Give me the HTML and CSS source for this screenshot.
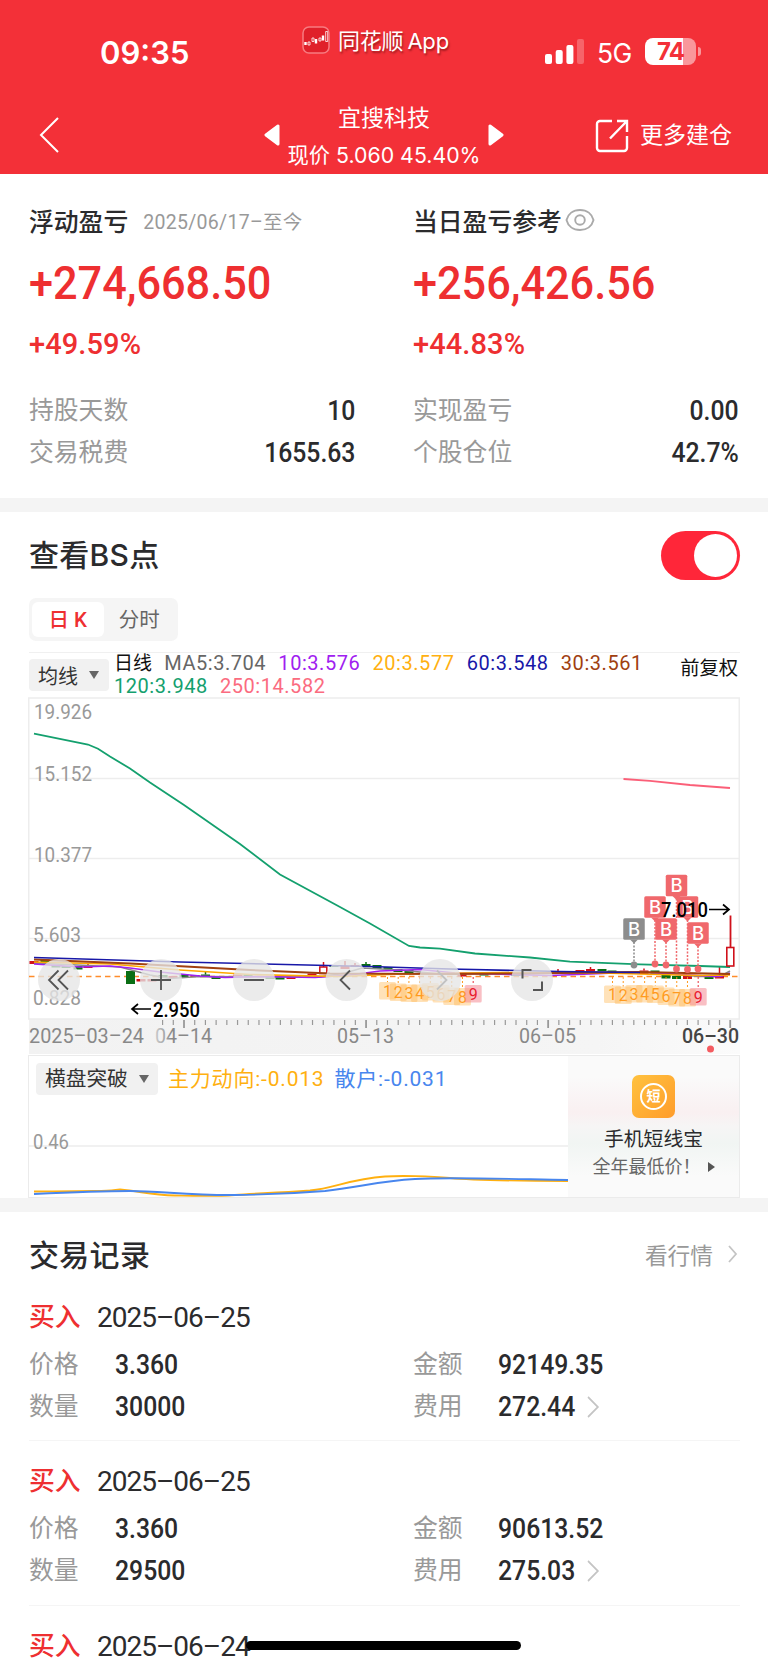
FILE: index.html
```html
<!DOCTYPE html>
<html lang="zh-CN">
<head>
    <meta charset="UTF-8">
    <meta name="viewport" content="width=device-width, initial-scale=1.0">
    <title>宜搜科技</title>
    <link rel="stylesheet" href="styles.css">
</head>
<body>

    <header class="header">
        <div class="status-bar">
            <div class="clock">09:35</div>
            <div class="app-name">
                <svg width="28" height="28" viewBox="0 0 28 28">
                    <rect x="1" y="1" width="26" height="26" rx="6" fill="#e0202a" stroke="#f77b80" stroke-width="1.5"/>
                    <path d="M3.500 16v3M14 13v4.500M21 9.500v5" stroke="#fff" stroke-width="2.400"/>
                    <path d="M6 16h2v3H6zM10 12h2v3.500h-2zM17 12h2v3h-2zM23.700 5.500h2v10h-2z" stroke="#fff" stroke-width="0.800" fill="none"/>
                </svg>
                <span>同花顺 App</span>
            </div>
            <div class="phone-state">
                <svg width="40" height="26" viewBox="0 0 40 26" fill="#fff">
                    <rect x="0" y="15" width="7" height="10" rx="2"/>
                    <rect x="10.7" y="11" width="7" height="14" rx="2"/>
                    <rect x="21.4" y="6" width="7" height="19" rx="2"/>
                    <rect x="32" y="0" width="7" height="25" rx="2" opacity="0.25"/>
                </svg>
                <span class="network">5G</span>
                <span class="battery">74</span>
                <span class="battery-tip"></span>
            </div>
        </div>
        <div class="nav">
            <svg class="back" width="22" height="38" viewBox="0 0 22 38"><path d="M20 2L3 19l17 17" fill="none" stroke="#fff" stroke-width="2"/></svg>
            <div class="stock">
                <svg width="16" height="22" viewBox="0 0 16 22"><path d="M14 2v18L2 11z" fill="#fff" stroke="#fff" stroke-width="3" stroke-linejoin="round"/></svg>
                <div class="stock-text">
                    <div class="stock-name">宜搜科技</div>
                    <div class="stock-price">现价 5.060 45.40%</div>
                </div>
                <svg width="16" height="22" viewBox="0 0 16 22"><path d="M2 2v18l12-9z" fill="#fff" stroke="#fff" stroke-width="3" stroke-linejoin="round"/></svg>
            </div>
            <div class="more">
                <svg width="34" height="34" viewBox="0 0 34 34" fill="none" stroke="#fff" stroke-width="2.4"><path d="M17 2H5a3 3 0 0 0-3 3v24a3 3 0 0 0 3 3h24a3 3 0 0 0 3-3V17M22 2h10v11M31.500 2.500L15 19.500"/></svg>
                <span>更多建仓</span>
            </div>
        </div>
    </header>

    <section class="summary">
        <div class="column">
            <div class="heading">浮动盈亏<span class="period">2025/06/17–至今</span></div>
            <div class="amount">+274,668.50</div>
            <div class="percent">+49.59%</div>
            <div class="pair"><span>持股天数</span><b>10</b></div>
            <div class="pair"><span>交易税费</span><b>1655.63</b></div>
        </div>
        <div class="column">
            <div class="heading">当日盈亏参考
                <svg width="30" height="24" viewBox="0 0 30 24" fill="none" stroke="#aaa" stroke-width="1.900"><path d="M1.500 12C3 6 8 2 15 2s12 4 13.500 10C27 18 22 22 15 22S3 18 1.500 12z"/><circle cx="15" cy="12" r="4.800"/></svg>
            </div>
            <div class="amount">+256,426.56</div>
            <div class="percent">+44.83%</div>
            <div class="pair"><span>实现盈亏</span><b>0.00</b></div>
            <div class="pair"><span>个股仓位</span><b>42.7%</b></div>
        </div>
    </section>

    <section class="bs">
        <div class="bs-head">
            <h2>查看BS点</h2>
            <div class="switch"><i></i></div>
        </div>
        <div class="tabs">
            <span class="tab active">日 K</span>
            <span class="tab">分时</span>
        </div>
        <div class="legend">
            <div class="select">均线<i></i></div>
            <div class="ma-list">
                <span class="day">日线</span>
                <span class="ma5">MA5:3.704</span>
                <span class="ma10">10:3.576</span>
                <span class="ma20">20:3.577</span>
                <span class="ma60">60:3.548</span>
                <span class="ma30">30:3.561</span>
                <span class="ma120">120:3.948</span>
                <span class="ma250">250:14.582</span>
            </div>
            <div class="adjust">前复权</div>
        </div>

        <svg class="chart" width="768" height="358" viewBox="0 697 768 358">
            <defs>
                <linearGradient id="band" x1="0" x2="1" y1="0" y2="0">
                    <stop offset="0" stop-color="#f2f2f2"/>
                    <stop offset="0.8" stop-color="#f5f5f5"/>
                    <stop offset="1" stop-color="#fbfbfb"/>
                </linearGradient>
                <linearGradient id="fade" x1="0" x2="1" y1="0" y2="0">
                    <stop offset="0" stop-color="#ccc"/>
                    <stop offset="0.3" stop-color="#888"/>
                </linearGradient>
            </defs>
            <rect x="29" y="1019" width="711" height="35" fill="url(#band)"/>
            <g fill="none" stroke="#ededed" stroke-width="1.500">
                <rect x="28.750" y="698" width="710.500" height="321"/>
                <path d="M29 778.500H739M29 858.500H739M29 938.500H739"/>
            </g>
            <g class="axis">
                <text x="34" y="718.500" textLength="58" lengthAdjust="spacingAndGlyphs">19.926</text>
                <text x="34" y="781" textLength="58" lengthAdjust="spacingAndGlyphs">15.152</text>
                <text x="34" y="861.500" textLength="58" lengthAdjust="spacingAndGlyphs">10.377</text>
                <text x="33" y="942" textLength="48" lengthAdjust="spacingAndGlyphs">5.603</text>
                <text x="33" y="1004.500" textLength="48" lengthAdjust="spacingAndGlyphs">0.828</text>
            </g>
            <path d="M29 976.500H739" stroke="#ff8c2b" stroke-width="1.400" stroke-dasharray="5.500 4"/>
            <g id="candles"></g>
            <g fill="none" stroke-width="1.600">
                <path stroke="#888" d="M34 963L120 967 150 975 170 978.500 200 976.500 320 977 345 973 362 968 400 970 440 974 560 973 640 972 680 975 700 976.500 720 976.500 730 971"/>
                <path stroke="#a020f0" d="M34 964L80 967 110 966 130 968 160 972 200 976 225 977.500 260 976.500 315 977.500 350 975 380 971 420 969.500 455 973 550 975.500 590 974 640 972 690 975 715 976.500 722 976 730 973"/>
                <path stroke="#ffa800" d="M34 962L110 964 180 970 250 974.500 340 976.500 400 974 500 972.500 600 973 700 975.500 730 975"/>
                <path stroke="#a04010" stroke-width="2" d="M34 959.500L130 963.500 250 970 330 973.500 450 974 520 973.500 640 972 730 974"/>
                <path stroke="#1818a8" d="M34 957.500L180 962 370 966.500 450 969 560 971.500 640 972.500"/>
                <path stroke="#14a06e" stroke-width="1.800" d="M34 733.700L88 744.500 98 748.700 110 756.500 130 768.500 150 782.500 184 805 240 844 280 874.500 340 907 370 923.500 409 946 420 947.500 440 948.700 475 953.500 530 957.500 570 961.700 640 964.300 700 966 730 967"/>
                <path stroke="#fb5f78" stroke-width="1.800" d="M623.500 779L650 780.800 690 785 730 788"/>
            </g>
            <g id="flags"></g>
            <g id="buys"></g>
            <g stroke="#d0111b" fill="#fff"><path d="M730.500 915.500V947" stroke-width="1.800"/><rect x="726.800" y="947.500" width="7" height="18.500" stroke-width="1.600"/></g>
            <g class="extreme">
                <text x="661" y="917" textLength="47" lengthAdjust="spacingAndGlyphs">7.010</text>
                <text x="153" y="1016.500" textLength="47" lengthAdjust="spacingAndGlyphs">2.950</text>
                <path d="M709 909.500H729M723 904.500l6 5-6 5M151 1009H132M138 1004l-6 5 6 5"/>
            </g>
            <g fill="#e6e6e6" fill-opacity="0.780">
                <circle cx="59" cy="980" r="21"/>
                <circle cx="161" cy="980" r="21"/>
                <circle cx="254" cy="980" r="21"/>
                <circle cx="346.500" cy="980" r="21"/>
                <circle cx="440" cy="980" r="21"/>
                <circle cx="532" cy="980" r="21"/>
            </g>
            <g fill="none" stroke="#555" stroke-width="1.800">
                <path d="M58.500 970.500L49 980l9.500 9.500M68 970.500L58.500 980l9.500 9.500"/>
                <path d="M151 980h20M161 970v20M244 980h20M350 970.500L340.500 980l9.500 9.500"/>
                <path d="M437 970.500l9.500 9.500-9.500 9.500" stroke="#c2c2c2"/>
                <path d="M522.500 978.500v-8.500h9M533 990h9v-8.500" stroke-width="2"/>
            </g>
            <g id="ticks" stroke="#999"></g>
            <g class="axis dates">
                <text x="29" y="1043" textLength="115" lengthAdjust="spacingAndGlyphs">2025–03–24</text>
                <text x="155" y="1043" textLength="57" lengthAdjust="spacingAndGlyphs" fill="url(#fade)">04–14</text>
                <text x="337" y="1043" textLength="57" lengthAdjust="spacingAndGlyphs">05–13</text>
                <text x="519" y="1043" textLength="57" lengthAdjust="spacingAndGlyphs">06–05</text>
                <text x="682" y="1043" textLength="57" lengthAdjust="spacingAndGlyphs" class="today">06–30</text>
            </g>
            <circle cx="710.500" cy="1049" r="3.500" fill="#f45b60"/>
        </svg>

        <div class="indicator">
            <div class="indicator-chart">
                <div class="indicator-legend">
                    <div class="select">横盘突破<i></i></div>
                    <span class="main-force">主力动向:-0.013</span>
                    <span class="retail">散户:-0.031</span>
                </div>
                <svg width="539" height="101" viewBox="29 1096 539 101">
                    <path d="M29 1146H568" stroke="#ededed" stroke-width="1.500"/>
                    <text x="33" y="1149" textLength="36" lengthAdjust="spacingAndGlyphs" class="axis">0.46</text>
                    <path fill="none" stroke="#ffb010" stroke-width="1.900" d="M34 1191.500C60 1191 75 1191.200 95 1191S115 1189.500 120 1189.500C140 1191 150 1195 175 1195.500S215 1196.500 235 1195 275 1193 310 1190.500C335 1188 350 1179 385 1176.500 400 1175.500 430 1176 450 1178S520 1180.800 568 1181"/>
                    <path fill="none" stroke="#4886ee" stroke-width="1.900" d="M34 1194C65 1192.500 100 1191 130 1191S190 1195.500 235 1195 300 1193 325 1191C360 1187 380 1181 415 1179 450 1177 510 1179 568 1180"/>
                </svg>
            </div>
            <div class="promo">
                <div class="promo-icon"><span>短</span></div>
                <div class="promo-title">手机短线宝</div>
                <div class="promo-text">全年最低价！<i></i></div>
            </div>
        </div>
    </section>

    <section class="records">
        <div class="records-head">
            <h2>交易记录</h2>
            <span class="quote">看行情<svg width="11" height="18" viewBox="0 0 11 18"><path d="M2 1l7 8-7 8"/></svg></span>
        </div>
        <div class="record">
            <div class="record-title"><em>买入</em>2025–06–25</div>
            <div class="record-row"><span>价格</span><b>3.360</b><span>金额</span><b>92149.35</b></div>
            <div class="record-row"><span>数量</span><b>30000</b><span>费用</span><b>272.44<svg width="14" height="22" viewBox="0 0 14 22"><path d="M1 1l11 10L1 21"/></svg></b></div>
        </div>
        <div class="record">
            <div class="record-title"><em>买入</em>2025–06–25</div>
            <div class="record-row"><span>价格</span><b>3.360</b><span>金额</span><b>90613.52</b></div>
            <div class="record-row"><span>数量</span><b>29500</b><span>费用</span><b>275.03<svg width="14" height="22" viewBox="0 0 14 22"><path d="M1 1l11 10L1 21"/></svg></b></div>
        </div>
        <div class="record last">
            <div class="record-title"><em>买入</em>2025–06–24</div>
        </div>
    </section>

    <div class="home-bar"></div>

    <script>
        const STEP = 10.71;
        const RED = "#d0111b", GREEN = "#0a6e14";

        // [x, top, bottom, color, wick top]
        const candles = [
            [34, 961, 964, RED], [45, 959.5, 962, GREEN], [56, 965, 967.5, GREEN], [66, 966, 968, GREEN], [78, 966, 969.5, GREEN],
            [88, 966, 968, RED, 963], [99, 966, 967, RED], [130.5, 971, 984, GREEN], [141, 979, 981.5, RED], [152, 979, 981.5, RED],
            [163, 975, 977.5, GREEN], [173, 976, 978, RED], [184, 974.5, 978, GREEN], [195, 975, 977, RED], [205.500, 974.5, 977, GREEN, 972],
            [216, 976.5, 979, GREEN], [238, 974.5, 976, RED], [248, 974.5, 977, GREEN], [270, 977, 979, GREEN], [280, 977, 979.5, GREEN],
            [291, 977, 979, RED], [312, 973.5, 975.5, RED], [334, 965, 967, GREEN], [345, 966, 969, RED, 961], [355, 965, 967, RED, 963],
            [366, 964, 966.5, GREEN, 962], [377, 965, 969, GREEN], [388, 967, 969, GREEN], [398, 969, 972, GREEN], [409, 970, 973, GREEN],
            [462, 973, 976.5, RED], [484, 973.5, 975.5, GREEN], [516, 974, 976, GREEN], [558, 971, 974, RED, 969], [580, 970, 972, RED],
            [590.500, 969, 971.5, RED, 967], [602, 969, 971, GREEN], [612, 970.5, 974, GREEN], [644, 970.5, 974, RED, 968.5], [655, 970.5, 974.5, GREEN],
            [666, 975, 978.5, GREEN], [676.500, 976, 979, GREEN], [687.500, 975.5, 979, RED], [709, 976, 979, GREEN], [719.500, 976, 978.5, RED, 967]
        ];
        document.getElementById("candles").innerHTML = candles.map(([x, top, bottom, color, wick]) =>
            `<rect x="${x - 4.5}" y="${top}" width="9" height="${bottom - top}" fill="${color}"/>` +
            (wick ? `<path d="M${x} ${wick}V${top}" stroke="${color}" stroke-width="1.5"/>` : "")
        ).join("") + `<path d="M323.5 962v5" stroke="${RED}" stroke-width="1.5"/><rect x="319.800" y="967" width="7" height="6.500" fill="#fff" stroke="${RED}" stroke-width="1.500"/>`;

        // nine-turn sequence numbers under the candles
        const groups = [
            { start: 387.5, ys: [991, 992.5, 993.5, 993.5, 992, 994, 996.5, 997, 994] },
            { start: 612.5, ys: [994.5, 995.5, 994, 994, 994.5, 996.5, 998, 998, 997] }
        ];
        document.getElementById("flags").innerHTML = groups.map(g => g.ys.map((y, i) => {
            const x = g.start + i * STEP;
            const last = i === 8;
            return `<path d="M${x} 977V${y - 9}" stroke="${last ? "#e8303a" : "#ff9a1e"}" stroke-dasharray="2 2"/>` +
                `<rect x="${x - 8.5}" y="${y - 9}" width="17" height="17.500" rx="1.500" fill="${last ? "#f4808a" : "#ffb650"}" fill-opacity="${last ? 0.5 : 0.4}"/>` +
                `<text x="${x}" y="${y + 5.5}" class="turn${last ? " turn-last" : ""}">${i + 1}</text>`;
        }).join("")).join("");

        // buy markers: [x, badge center, dot, color]
        const buys = [
            [634, 929, 965, "#8d8d8d"], [655, 907, 964, "#f0686c"], [666, 929, 965, "#f0686c"],
            [676.5, 885.500, 969, "#f0686c"], [687.5, 907, 969.5, "#f0686c"], [698, 933, 969, "#f0686c"]
        ];
        document.getElementById("buys").innerHTML = buys.map(([x, y, dot, color]) =>
            `<path d="M${x} ${y + 13}V${dot}" stroke="${color}" stroke-width="1.500" stroke-dasharray="2 1.500"/>` +
            `<circle cx="${x}" cy="${dot}" r="3.400" fill="${color}"/>` +
            `<rect x="${x - 10.75}" y="${y - 10.75}" width="21.500" height="21.500" rx="1.500" fill="${color}"/>` +
            `<path d="M${x - 4} ${y + 10.5}h8l-4 4z" fill="${color}"/>` +
            `<text x="${x}" y="${y + 6.5}" class="buy">B</text>`
        ).join("");

        let ticks = "";
        for (let i = -2; i <= 51; i++) {
            const x = 184 + i * STEP;
            const major = i % 17 === 0;
            ticks += `<path d="M${x} 1020V${major ? 1028 : 1025}" stroke-width="${major ? 1.8 : 1.2}"/>`;
        }
        document.getElementById("ticks").innerHTML = ticks;
    </script>

</body>
</html>
```

FILE: styles.css
```css
* { box-sizing: border-box; }
body { margin: 0; width: 768px; height: 1665px; overflow: hidden; background: #fff; color: #2b2b2d; font-family: Roboto, "Noto Sans CJK SC", sans-serif; }
h2 { margin: 0; font: 500 30px/44px Inter, "Noto Sans CJK SC", sans-serif; letter-spacing: 0.3px; }
b { font-weight: 500; }
em, i { font-style: normal; }
svg { display: block; flex: none; }

.header { height: 174px; background: #f33038; color: #fff; }
.status-bar { height: 98px; display: grid; grid-template-columns: 302px 243px 1fr; }
.clock { padding: 33px 0 0 100px; font: 600 31px/40px Inter, sans-serif; letter-spacing: 0; }
.app-name { display: flex; gap: 8px; padding-top: 26px; font-size: 22px; line-height: 30px; text-shadow: 1px 2px 2px rgba(60, 0, 0, 0.45); }
.app-name span { font-family: Inter, "Noto Sans CJK SC", sans-serif; font-size: 22px; letter-spacing: -0.2px; word-spacing: -2px; }
.phone-state { display: flex; align-items: flex-start; padding-top: 39px; }
.network { margin: 0 13px 0 12px; width: 35px; font: 400 26.5px/28px Inter, sans-serif; letter-spacing: -0.5px; }
.battery { width: 51px; height: 27px; margin-top: -1px; border-radius: 8px; background: linear-gradient(90deg, #fff 74%, #f9979b 74%); color: #f33038; font: 700 24px/27px Inter, sans-serif; text-align: center; letter-spacing: -1px; }
.battery-tip { width: 3px; height: 9px; margin: 8px 0 0 2px; border-radius: 0 3px 3px 0; background: #f9979b; }
.nav { height: 76px; display: grid; grid-template-columns: 264px 240px 1fr; }
.back { margin: 18px 0 0 38px; }
.stock { display: flex; justify-content: space-between; align-items: flex-start; text-align: center; }
.stock > svg { margin-top: 26px; }
.stock-text { white-space: nowrap; margin: 0 -8px; }
.stock-name { font-size: 23px; line-height: 36px; padding-top: 3px; }
.stock-price { font: 400 21.3px/36px Inter, "Noto Sans CJK SC", sans-serif; }
.more { display: flex; gap: 11px; padding: 21px 0 0 91px; font-size: 23px; line-height: 34px; }

.summary { height: 338px; padding: 22px 29px 0 29px; border-bottom: 14px solid #f4f4f4; display: grid; grid-template-columns: 326px 326px; gap: 58px; }
.heading { display: flex; align-items: center; height: 48px; font-size: 24.8px; font-weight: 500; white-space: nowrap; }
.heading svg { margin-left: 3px; }
.period { margin-left: 15px; font-size: 19.5px; font-weight: 400; color: #999; letter-spacing: 0.3px; }
/* figures are set a little narrower than Roboto draws them */
.amount { height: 76px; line-height: 79px; font-size: 46px; font-weight: 500; color: #ee2f31; transform: scaleX(0.94); transform-origin: left; }
.percent { height: 46px; line-height: 48px; font-size: 29px; font-weight: 500; color: #ee2f31; letter-spacing: 0.1px; }
.pair { display: flex; justify-content: space-between; align-items: center; height: 42px; font-size: 24.8px; line-height: 36px; color: #999; }
.percent + .pair { margin-top: 24px; }
.pair b { font-size: 27.5px; color: #2b2b2d; transform: scaleX(0.9); transform-origin: right; }

.bs { height: 700px; border-bottom: 14px solid #f4f4f4; }
.bs-head { height: 86px; padding: 19px 28px 0 29px; display: flex; justify-content: space-between; }
.bs-head h2 { line-height: 49px; }
.switch { width: 79px; height: 49px; padding: 3px 3px; border-radius: 25px; background: #ff2639; display: flex; justify-content: flex-end; }
.switch i { width: 43px; height: 43px; border-radius: 50%; background: #fff; }
.tabs { width: 149px; height: 43px; margin-left: 29px; padding: 4px 3px; border-radius: 7px; background: #f5f5f5; display: flex; }
.tab { flex: 1; font-size: 20.5px; line-height: 36px; text-align: center; color: #666; }
.active { border-radius: 6px; background: #fff; color: #ee2f31; font-weight: 500; }
.legend { height: 45px; margin: 11px 28px 0 29px; border-top: 1.5px solid #f0f0f0; display: flex; }
.select { height: 32px; display: flex; align-items: center; gap: 11px; padding: 0 9px; border-radius: 4px; background: #f1f1f1; font-size: 20.7px; color: #333; white-space: nowrap; }
.select i { border: 5.5px solid transparent; border-top: 8px solid #666; border-bottom: 0; }
.legend .select { width: 80px; margin-top: 6px; font-size: 20px; }
.ma-list { width: 540px; margin: -1px 0 0 5px; display: flex; flex-wrap: wrap; gap: 0 12.2px; font-size: 20px; line-height: 23.2px; letter-spacing: 0.55px; align-content: flex-start; }
.ma-list .day { font-size: 19px; letter-spacing: 0; color: #111; }
.ma5 { color: #666; }
.ma10 { color: #a020f0; }
.ma20 { color: #ffb010; }
.ma60 { color: #1818a8; }
.ma30 { color: #a04010; }
.ma120 { color: #14a06e; }
.ma250 { color: #fb6b80; }
.adjust { margin-left: auto; padding-right: 2px; font-size: 19.3px; line-height: 31px; color: #111; white-space: nowrap; }
.axis { font-size: 21px; fill: #999; }
.dates { fill: #888; }
.dates .today { fill: #444; font-weight: 500; }
.extreme text { font-size: 21px; font-weight: 500; fill: #000; }
.extreme path { fill: none; stroke: #000; stroke-width: 1.7; }
.turn { font-size: 16px; text-anchor: middle; fill: #ff9a1e; }
.turn-last { fill: #e8202f; }
.buy { font: 500 18.5px Inter, sans-serif; text-anchor: middle; fill: #fff; }

.indicator { height: 143px; margin: 0 28px 0 28px; border: 1px solid #ebebeb; display: flex; }
.indicator-chart { width: 539px; }
.indicator-legend { height: 40px; padding: 6px 0 0 7px; display: flex; align-items: center; white-space: nowrap; font-size: 21px; letter-spacing: 0.8px; line-height: 30px; }
.indicator-legend .select { width: 122px; letter-spacing: 0; }
.main-force { margin-left: 10px; color: #ffb010; }
.retail { margin-left: 10px; color: #4886ee; }
.promo { flex: 1; display: flex; flex-direction: column; align-items: center; padding-top: 19px; background: linear-gradient(180deg, #fafafa 15%, #f9f0f1 40%, #f6f5f5 50%, #f1f5f3 62%, #fafafa 85%); }
.promo-icon { width: 43px; height: 43px; padding: 8px; border-radius: 7px; background: linear-gradient(135deg, #ffc23f, #ff9c2b); }
.promo-icon span { display: block; width: 27px; height: 27px; border: 2px solid #fff; border-radius: 50%; color: #fff; font-size: 14px; font-weight: 700; line-height: 22px; text-align: center; }
.promo-title { margin-top: 7px; font-size: 19.8px; line-height: 30px; }
.promo-text { display: flex; align-items: center; font-size: 18px; line-height: 24px; color: #666; }
.promo-text i { margin-left: 7px; border: 5px solid transparent; border-left: 7px solid #555; border-right: 0; }

.records { padding: 0 28px 0 29px; }
.records-head { height: 83px; padding-top: 21px; display: flex; justify-content: space-between; }
.quote { display: flex; align-items: center; height: 42px; gap: 14px; padding-right: 2px; font-size: 22.7px; color: #999; }
.records svg path { fill: none; stroke: #c4c4c4; stroke-width: 1.8; }
.record { height: 164.5px; border-bottom: 1.5px solid #f5f5f5; }
.record:nth-child(2) { height: 146px; }
.record:nth-child(n+3) { padding-top: 18px; }
.last { height: 66px; overflow: hidden; border: 0; }
.record-title { height: 49px; line-height: 45px; font-size: 28px; letter-spacing: -1px; display: flex; }
.record-title em { width: 68px; font-size: 25.8px; font-weight: 500; color: #ee2f31; letter-spacing: 0; }
.record-row { height: 42px; display: grid; grid-template-columns: 86px 298px 85px 1fr; align-items: center; font-size: 24.8px; line-height: 36px; color: #999; }
.record-row span { padding-bottom: 1px; }
.record-row b { display: flex; align-items: center; gap: 13px; font-size: 27.5px; color: #2b2b2d; transform: scaleX(0.9); transform-origin: left; }
.home-bar { position: absolute; left: 246px; top: 1641px; width: 275px; height: 9px; border-radius: 5px; background: #000; }
```
